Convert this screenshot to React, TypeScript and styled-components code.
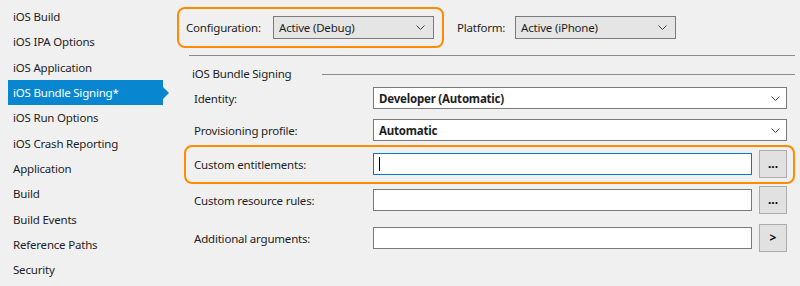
import React from 'react';
import styled, { createGlobalStyle } from 'styled-components';

const GlobalStyle = createGlobalStyle`
  html, body {
    margin: 0;
    padding: 0;
    background: #f0f0f0;
  }
  body {
    font-family: 'Noto Sans', 'Open Sans', sans-serif;
    font-size: 11.5px;
    letter-spacing: -0.2px;
    color: #1e1e1e;
  }
`;

const Page = styled.div`
  display: flex;
  width: 800px;
  height: 286px;
  overflow: hidden;
  background: #f0f0f0;
`;

// Sidebar
const Sidebar = styled.div`
  width: 170px;
  flex-shrink: 0;
  padding-top: 4px;
  display: flex;
  flex-direction: column;
`;

const NavItem = styled.div<{ $active?: boolean }>`
  position: relative;
  height: 25.3px;
  display: flex;
  align-items: center;
  margin-left: 8px;
  width: 155px;
  padding-left: 5px;
  box-sizing: border-box;
  white-space: nowrap;
  background: ${p => (p.$active ? '#0886d0' : 'transparent')};
  color: ${p => (p.$active ? '#ffffff' : '#1e1e1e')};

  &::after {
    content: '';
    display: ${p => (p.$active ? 'block' : 'none')};
    position: absolute;
    right: -6px;
    top: 7px;
    border-left: 6px solid #0886d0;
    border-top: 6px solid transparent;
    border-bottom: 6px solid transparent;
  }
`;

// Main
const Main = styled.div`
  flex: 1;
  padding: 7px 5px 0 7px;
  display: flex;
  flex-direction: column;
`;

const TopBar = styled.div`
  display: flex;
  align-items: center;
  height: 41px;
`;

const Highlight = styled.div`
  display: flex;
  align-items: center;
  height: 41px;
  box-sizing: border-box;
  border: 2px solid #ff8c00;
  border-radius: 8px;
  padding: 0 8px 0 7px;
`;

const TopLabel = styled.span<{ $w: number }>`
  width: ${p => p.$w}px;
  white-space: nowrap;
`;

const TopSelect = styled.div`
  width: 161px;
  height: 23px;
  box-sizing: border-box;
  border: 1px solid #7a7a7a;
  background: #e5e5e5;
  display: flex;
  align-items: center;
  padding: 0 8px 0 5px;
  justify-content: space-between;
`;

const PlatformGroup = styled.div`
  display: flex;
  align-items: center;
  margin-left: 13px;
`;

const Separator = styled.div`
  height: 1px;
  background: #8c8c8c;
  margin: 7px 0 0 12px;
`;

const GroupHeader = styled.div`
  display: flex;
  align-items: center;
  margin-left: 15px;
  padding-top: 10px;
  height: 29px;
  box-sizing: border-box;
  line-height: 16px;
`;

const GroupTitle = styled.span`
  white-space: nowrap;
  padding-bottom: 3px;
`;

const GroupLine = styled.div`
  flex: 1;
  height: 1px;
  background: #8c8c8c;
  margin: 0 0 3px 31px;
`;

const Row = styled.div<{ $highlight?: boolean; $top: number }>`
  display: flex;
  align-items: center;
  margin: ${p => p.$top}px 0 0 7px;
  border: 2px solid ${p => (p.$highlight ? '#ff8c00' : 'transparent')};
  border-radius: 8px;
  padding: ${p => (p.$highlight ? '3px 6px 4px 8px' : '0 6px 0 8px')};
`;

const FieldLabel = styled.div`
  width: 179px;
  flex-shrink: 0;
  white-space: nowrap;
`;

const Select = styled.div`
  width: 414px;
  height: 22px;
  box-sizing: border-box;
  border: 1px solid #7a7a7a;
  background: #ffffff;
  display: flex;
  align-items: center;
  justify-content: space-between;
  padding: 0 6px 0 5px;
  font-weight: 700;
`;

const Input = styled.div<{ $focused?: boolean }>`
  width: 379px;
  height: 22px;
  box-sizing: border-box;
  border: 1px solid ${p => (p.$focused ? '#0078d7' : '#7a7a7a')};
  background: #ffffff;
  display: flex;
  align-items: center;
  padding-left: 5px;
`;

const Caret = styled.div`
  width: 1px;
  height: 14px;
  background: #000;
`;

const SmallButton = styled.div`
  width: 28px;
  height: 28px;
  margin-left: 7px;
  box-sizing: border-box;
  border: 1px solid #adadad;
  background: #e1e1e1;
  display: flex;
  align-items: center;
  justify-content: center;
  font-weight: 700;
  font-size: 12px;
  letter-spacing: 0;
  color: #000;
  padding-bottom: 2px;
`;

const Chevron = () => (
  <svg width="9" height="5" viewBox="0 0 9 5">
    <path d="M0.5 0.5 L4.5 4.5 L8.5 0.5" fill="none" stroke="#444" strokeWidth="1" />
  </svg>
);

const navItems = [
  'iOS Build',
  'iOS IPA Options',
  'iOS Application',
  'iOS Bundle Signing*',
  'iOS Run Options',
  'iOS Crash Reporting',
  'Application',
  'Build',
  'Build Events',
  'Reference Paths',
  'Security',
];

const App: React.FC = () => {
  return (
    <Page>
      <GlobalStyle />
      <Sidebar>
        {navItems.map(item => (
          <NavItem key={item} $active={item === 'iOS Bundle Signing*'}>
            {item}
          </NavItem>
        ))}
      </Sidebar>
      <Main>
        <TopBar>
          <Highlight>
            <TopLabel $w={87}>Configuration:</TopLabel>
            <TopSelect>
              <span>Active (Debug)</span>
              <Chevron />
            </TopSelect>
          </Highlight>
          <PlatformGroup>
            <TopLabel $w={58}>Platform:</TopLabel>
            <TopSelect>
              <span>Active (iPhone)</span>
              <Chevron />
            </TopSelect>
          </PlatformGroup>
        </TopBar>
        <Separator />
        <GroupHeader>
          <GroupTitle>iOS Bundle Signing</GroupTitle>
          <GroupLine />
        </GroupHeader>

        <Row $top={0}>
          <FieldLabel>Identity:</FieldLabel>
          <Select>
            <span>Developer (Automatic)</span>
            <Chevron />
          </Select>
        </Row>
        <Row $top={6}>
          <FieldLabel>Provisioning profile:</FieldLabel>
          <Select>
            <span>Automatic</span>
            <Chevron />
          </Select>
        </Row>
        <Row $top={2} $highlight>
          <FieldLabel>Custom entitlements:</FieldLabel>
          <Input $focused>
            <Caret />
          </Input>
          <SmallButton>...</SmallButton>
        </Row>
        <Row $top={0}>
          <FieldLabel>Custom resource rules:</FieldLabel>
          <Input />
          <SmallButton>...</SmallButton>
        </Row>
        <Row $top={6}>
          <FieldLabel>Additional arguments:</FieldLabel>
          <Input />
          <SmallButton>&gt;</SmallButton>
        </Row>
      </Main>
    </Page>
  );
};

export default App;
